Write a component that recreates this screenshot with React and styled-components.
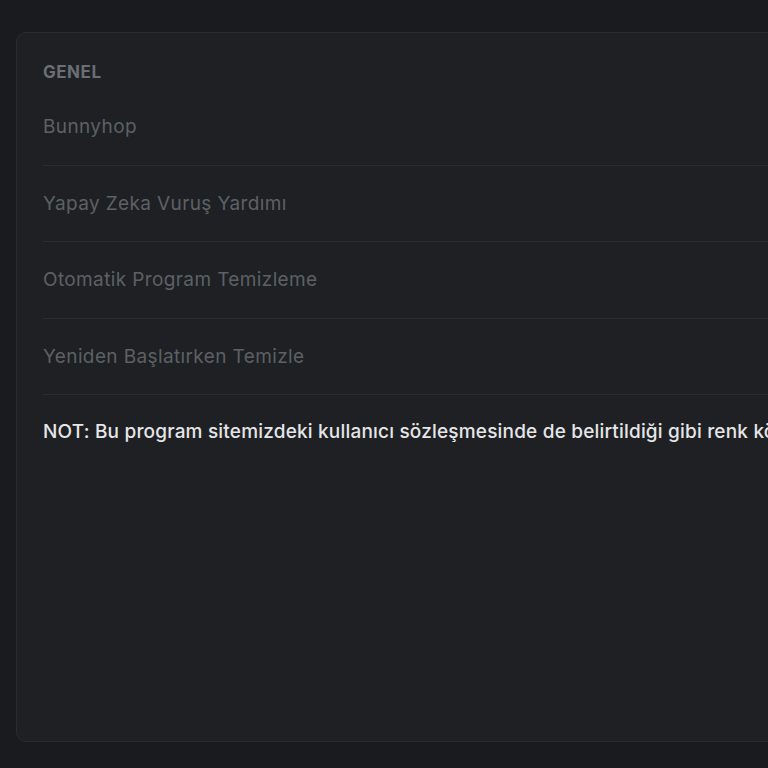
import React from 'react'
import styled, { createGlobalStyle } from 'styled-components'

const GlobalStyle = createGlobalStyle`
html, body {
    margin: 0;
    padding: 0;
    background: #1a1b1f;
    overflow: hidden;
}
body {
    font-family: 'Inter', 'Noto Sans', sans-serif;
}
`

const Page = styled.div`
width: 100vw;
height: 100vh;
padding: 32px 0 0 16px;
box-sizing: border-box;
overflow: hidden;
`

const Card = styled.section`
width: 1200px;
height: 710px;
box-sizing: border-box;
background: #1e2024;
border: 1px solid #2a2c31;
border-radius: 10px;
padding: 22px 26px 0 26px;
`

const SectionTitle = styled.h2`
margin: 0;
height: 34px;
display: flex;
align-items: center;
font-size: 17px;
font-weight: 700;
letter-spacing: 0.03em;
color: #6b6e74;
text-transform: uppercase;
`

const List = styled.div`
display: flex;
flex-direction: column;
`

const Row = styled.div`
height: 76.5px;
display: flex;
align-items: center;
border-bottom: 1px solid #2a2c31;
box-sizing: border-box;
font-size: 19px;
letter-spacing: 0.02em;
color: ${props => props.$disabled ? '#5d6065' : '#e6e6e8'};
`

const Note = styled.p`
margin: 0;
height: 72px;
display: flex;
align-items: center;
white-space: nowrap;
font-size: 19px;
font-weight: 500;
letter-spacing: 0.01em;
color: #e6e6e8;
`

const settings = [
    'Bunnyhop',
    'Yapay Zeka Vuruş Yardımı',
    'Otomatik Program Temizleme',
    'Yeniden Başlatırken Temizle',
]

const App = () => {
    return (
        <>
            <GlobalStyle />
            <Page>
                <Card>
                    <SectionTitle>Genel</SectionTitle>
                    <List>
                        {settings.map(s => (
                            <Row key={s} $disabled>{s}</Row>
                        ))}
                    </List>
                    <Note>
                        NOT: Bu program sitemizdeki kullanıcı sözleşmesinde de belirtildiği gibi renk körü oyuncular için hazırlanmıştır.
                    </Note>
                </Card>
            </Page>
        </>
    )
}

export default App
